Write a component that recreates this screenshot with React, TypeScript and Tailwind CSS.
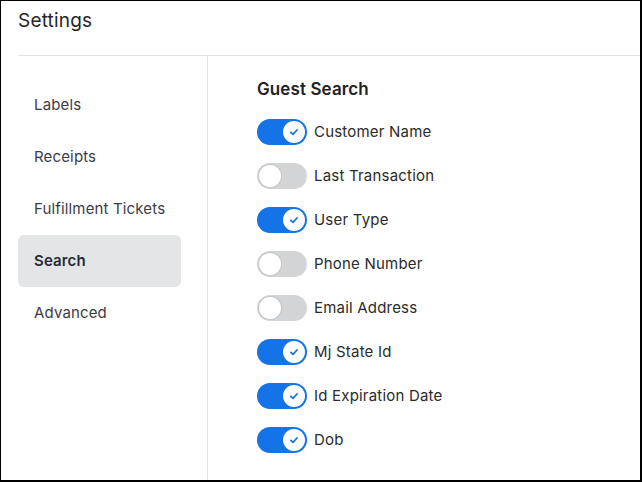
import React from "react";

const items = ["Labels", "Receipts", "Fulfillment Tickets", "Search", "Advanced"];
const toggles: [string, boolean][] = [
  ["Customer Name", true],
  ["Last Transaction", false],
  ["User Type", true],
  ["Phone Number", false],
  ["Email Address", false],
  ["Mj State Id", true],
  ["Id Expiration Date", true],
  ["Dob", true],
];

function Toggle({ on }: { on: boolean }) {
  return (
    <div
      className={
        on
          ? "flex h-[26px] w-[50px] shrink-0 items-center justify-end rounded-full bg-[#1473e6] px-[2px]"
          : "flex h-[26px] w-[50px] shrink-0 items-center justify-start rounded-full bg-[#d2d4d6] px-[2px]"
      }
    >
      <div
        className={
          on
            ? "flex h-[22px] w-[22px] items-center justify-center rounded-full bg-white"
            : "h-[22px] w-[22px] rounded-full bg-white ring-1 ring-[#c4c6c8]"
        }
      >
        {on && (
          <svg width="12" height="12" viewBox="0 0 12 12" fill="none">
            <path
              d="M2.8 6.3 L5 8.4 L9.2 3.8"
              stroke="#1473e6"
              strokeWidth="1.7"
              strokeLinecap="round"
              strokeLinejoin="round"
            />
          </svg>
        )}
      </div>
    </div>
  );
}

export default function App() {
  return (
    <div
      className="flex h-[482px] w-[642px] flex-col overflow-hidden border-t border-l border-r-2 border-b-2 border-black bg-white text-[#2b2b2b]"
      style={{ fontFamily: "Inter, 'Noto Sans', sans-serif" }}
    >
      <div className="ml-[17px] flex h-[55px] shrink-0 items-start border-b border-[#e2e2e2] pt-[6px]">
        <span className="text-[19px] leading-[28px] tracking-[0.2px] text-[#262626]">Settings</span>
      </div>
      <div className="flex flex-1">
        <div className="w-[207px] shrink-0 border-r border-[#e2e2e2] pt-[23px] pl-[17px]">
          {items.map((it) => (
            <div
              key={it}
              className={
                it === "Search"
                  ? "flex h-[52px] w-[163px] items-center whitespace-nowrap rounded-md bg-[#e4e5e7] px-4 text-[15px] font-semibold tracking-[0.15px] text-[#2a2a38]"
                  : "flex h-[52px] w-[163px] items-center whitespace-nowrap px-4 text-[15px] tracking-[0.15px] text-[#3c3c48]"
              }
            >
              {it}
            </div>
          ))}
        </div>
        <div className="flex-1 pt-[21px] pl-[49px]">
          <div className="text-[17px] font-semibold leading-[24px] tracking-[0.1px] text-[#222]">Guest Search</div>
          <div className="mt-[9px] flex flex-col">
            {toggles.map(([label, on]) => (
              <div key={label} className="flex h-[44px] items-center gap-[7px]">
                <Toggle on={on} />
                <span className="whitespace-nowrap text-[15px] tracking-[0.2px] text-[#2b2b2b]">{label}</span>
              </div>
            ))}
          </div>
        </div>
      </div>
    </div>
  );
}
